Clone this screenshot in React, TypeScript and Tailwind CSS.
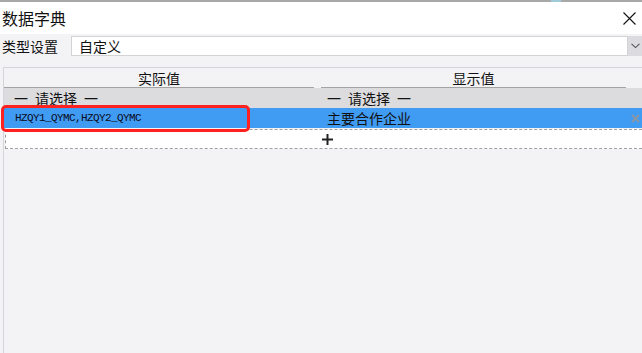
import React from 'react';

const FONT = '"Microsoft YaHei", "Noto Sans CJK SC", "Noto Sans", sans-serif';

function CloseIcon() {
  return (
    <svg width="13" height="13" viewBox="0 0 13 13" aria-hidden>
      <path d="M0.5 0.5 L12.5 12.5 M12.5 0.5 L0.5 12.5" stroke="#111" strokeWidth="1.1" fill="none" />
    </svg>
  );
}

function Chevron() {
  return (
    <svg width="9" height="6" viewBox="0 0 9 6" aria-hidden>
      <path d="M0.5 0.8 L4.5 4.6 L8.5 0.8" stroke="#555" strokeWidth="1.1" fill="none" />
    </svg>
  );
}

function RowRemove() {
  return (
    <svg width="9" height="9" viewBox="0 0 9 9" aria-hidden>
      <path d="M1 1 L8 8 M8 1 L1 8" stroke="#8a96a6" strokeWidth="2" fill="none" />
    </svg>
  );
}

function PlusIcon() {
  return (
    <svg width="11" height="11" viewBox="0 0 11 11" aria-hidden>
      <path d="M5.5 0 V11 M0 5.5 H11" stroke="#222" strokeWidth="2" fill="none" />
    </svg>
  );
}

function Placeholder() {
  return (
    <span className="flex items-center gap-[7px]">
      <span>一</span>
      <span>请选择</span>
      <span>一</span>
    </span>
  );
}

export default function App() {
  return (
    <div
      className="relative w-[642px] h-[353px] overflow-hidden bg-[#f3f3f5] flex flex-col text-[14px] text-[#111]"
      style={{ fontFamily: FONT }}
    >
      {/* top edge of the window behind */}
      <div className="flex h-[2px] shrink-0 bg-[#a8a8a8]">
        <div className="w-[551px]" />
        <div className="w-[10px] bg-[#9fcbd8]" />
      </div>

      {/* title bar */}
      <div className="h-[32px] shrink-0 bg-white flex items-center justify-between pl-[2px] pr-[6px]">
        <span className="text-[16px] leading-none">数据字典</span>
        <CloseIcon />
      </div>

      {/* type row */}
      <div className="mt-[2px] h-[20px] shrink-0 flex items-stretch">
        <div className="w-[71px] pl-[2px] flex items-center leading-none">类型设置</div>
        <div className="flex-1 bg-white border border-[#d3d3d6] flex items-center pl-[7px] leading-none">自定义</div>
        <div className="w-[14px] bg-[#dcdce0] flex items-center justify-center">
          <Chevron />
        </div>
      </div>

      {/* table */}
      <div className="mt-[11px] ml-[3px] flex-1 border-l border-t border-[#d6d6da] flex flex-col">
        <div className="h-[20px] flex">
          <div className="w-[310px] border-b border-[#a3a3a3] flex items-center justify-center leading-none">实际值</div>
          <div className="w-[7px]" />
          <div className="w-[305px] border-b border-[#a3a3a3] flex items-center justify-center leading-none">显示值</div>
        </div>

        <div className="h-[20px] bg-[#dcdcdf] flex items-center leading-none">
          <div className="w-[317px] pl-[10px]">
            <Placeholder />
          </div>
          <div className="pl-[6px]">
            <Placeholder />
          </div>
        </div>

        <div className="h-[20px] bg-[#409bf3] flex items-center leading-none">
          <div
            className="w-[317px] pl-[11px] text-[11px] tracking-[-0.6px] text-[#0a0a20]"
            style={{ fontFamily: '"Liberation Mono", monospace' }}
          >
            HZQY1_QYMC,HZQY2_QYMC
          </div>
          <div className="flex-1 pl-[6px]">主要合作企业</div>
          <div className="pr-[2px] flex items-center">
            <RowRemove />
          </div>
        </div>

        <div className="mt-[1px] ml-[1px] h-[20px] bg-white border-t border-b border-l border-dashed border-[#a0a0a0] flex items-center">
          <div className="w-[316px]" />
          <PlusIcon />
        </div>
      </div>

      {/* annotation highlight */}
      <div className="absolute left-[1px] top-[105px] w-[249px] h-[27px] border-[3px] border-[#ff2020] rounded-[5px]" />
    </div>
  );
}
